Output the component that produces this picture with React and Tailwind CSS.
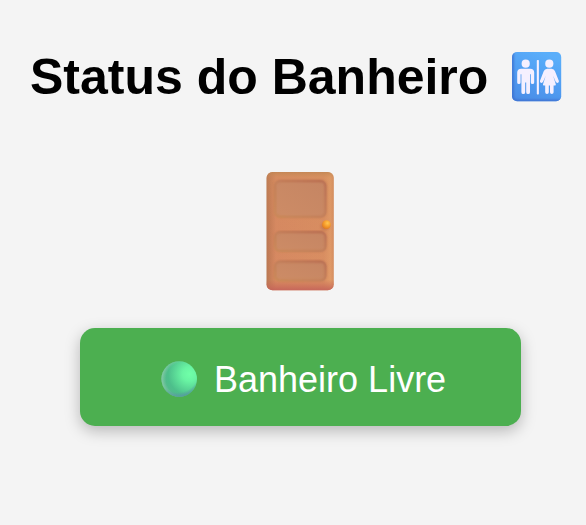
function RestroomIcon() {
  return (
    <svg className="h-[50px] w-[50px] shrink-0" viewBox="0 0 50 50" aria-hidden="true">
      <defs>
        <linearGradient id="sign" x1="0.2" y1="1" x2="0.6" y2="0">
          <stop offset="0" stopColor="#4a8ce6" />
          <stop offset="0.5" stopColor="#509df2" />
          <stop offset="1" stopColor="#5aaefa" />
        </linearGradient>
        <filter id="edge" x="-10%" y="-10%" width="120%" height="120%">
          <feGaussianBlur stdDeviation="1" />
        </filter>
        <clipPath id="signClip"><rect x="0" y="0" width="49.2" height="49.2" rx="5" /></clipPath>
      </defs>
      <g clipPath="url(#signClip)">
        <rect width="50" height="50" fill="url(#sign)" />
        <path d="M.5 0V44Q.5 49 6 49H50" fill="none" stroke="#3e70cf" strokeWidth="2.4" filter="url(#edge)" />
      </g>
      <g fill="#f5f0ff">
        <circle cx="13.7" cy="11.7" r="4.1" />
        <path d="M9.2 16.8H18.2Q22.2 16.8 22.2 20.6V30.4Q22.2 32.1 20.5 32.1T18.8 30.4V22.2H18V40.2Q18 42.1 16.1 42.1T14.2 40.2V30.5H13.2V40.2Q13.2 42.1 11.3 42.1T9.4 40.2V22.2H8.6V30.4Q8.6 32.1 6.9 32.1T5.2 30.4V20.6Q5.2 16.8 9.2 16.8Z" />
        <rect x="24.8" y="8.1" width="2.1" height="34.4" rx=".7" />
        <circle cx="37.3" cy="11.7" r="4.1" />
        <path d="M35.2 16.8H39.5Q42.2 16.8 43 19.3L46.8 28.7Q47.3 30.2 46 30.8T43.7 29.8L41.1 23.8L43.8 32.2Q44.1 33.4 42.9 33.4H41.6V40.3Q41.6 42 39.8 42T38 40.3V33.4H36.8V40.3Q36.8 42 35 42T33.2 40.3V33.4H31.9Q30.7 33.4 31 32.2L33.7 23.8L31.1 29.8Q30.3 31.4 28.9 30.8T28 28.7L31.7 19.3Q32.6 16.8 35.2 16.8Z" />
      </g>
    </svg>
  );
}

const panels = [
  { y: 8.3, h: 37.2 },
  { y: 59.3, h: 20.6 },
  { y: 88.8, h: 20.5 },
];

function DoorIcon() {
  return (
    <svg className="h-[119px] w-[68px]" viewBox="0 0 68 119" aria-hidden="true">
      <defs>
        <linearGradient id="wood" x1="0" y1="0" x2="1" y2="0">
          <stop offset="0" stopColor="#b97852" />
          <stop offset="0.06" stopColor="#c77f59" />
          <stop offset="0.14" stopColor="#d78a62" />
          <stop offset="0.85" stopColor="#d98f62" />
          <stop offset="0.95" stopColor="#e09a67" />
          <stop offset="1" stopColor="#d58e60" />
        </linearGradient>
        <linearGradient id="woodShade" x1="0" y1="0" x2="0" y2="1">
          <stop offset="0" stopColor="#bd8551" stopOpacity="0.75" />
          <stop offset="0.05" stopColor="#cf9158" stopOpacity="0.2" />
          <stop offset="0.91" stopColor="#c96855" stopOpacity="0" />
          <stop offset="1" stopColor="#c4625a" stopOpacity="0.9" />
        </linearGradient>
        <linearGradient id="panel" x1="0" y1="1" x2="1" y2="0">
          <stop offset="0" stopColor="#cd8c66" />
          <stop offset="1" stopColor="#c58563" />
        </linearGradient>
        <linearGradient id="rim" x1="0" y1="1" x2="1" y2="0">
          <stop offset="0" stopColor="#c98650" />
          <stop offset="0.5" stopColor="#c17a53" />
          <stop offset="1" stopColor="#b5654b" />
        </linearGradient>
        <radialGradient id="knob" cx="0.62" cy="0.32" r="0.7">
          <stop offset="0" stopColor="#ffc552" />
          <stop offset="0.45" stopColor="#f9a42f" />
          <stop offset="1" stopColor="#df7920" />
        </radialGradient>
        <filter id="soft" x="-10%" y="-10%" width="120%" height="120%">
          <feGaussianBlur stdDeviation="0.8" />
        </filter>
      </defs>
      <rect x="0.5" y="0" width="67.3" height="118.3" rx="6" fill="url(#wood)" />
      <rect x="0.5" y="0" width="67.3" height="118.3" rx="6" fill="url(#woodShade)" />
      {panels.map(({ y, h }) => (
        <g key={y}>
          <rect x="8.3" y={y} width="52" height={h} rx="5.5" fill="url(#panel)" />
          <rect x="9" y={y + 0.7} width="50.6" height={h - 1.4} rx="5" fill="none" stroke="url(#rim)" strokeWidth="1.8" filter="url(#soft)" />
        </g>
      ))}
      <ellipse cx="59" cy="54.5" rx="4.5" ry="4" fill="#b8683f" opacity="0.45" filter="url(#soft)" />
      <circle cx="60.4" cy="52.7" r="4.4" fill="url(#knob)" />
    </svg>
  );
}

function FreeDot() {
  return (
    <svg className="h-9 w-9 shrink-0" viewBox="0 0 36 36" aria-hidden="true">
      <defs>
        <radialGradient id="ball" cx="0.79" cy="0.36" r="0.8">
          <stop offset="0" stopColor="#70ffa8" />
          <stop offset="0.25" stopColor="#69f4a3" />
          <stop offset="0.75" stopColor="#4dbf8b" />
          <stop offset="1" stopColor="#55b88c" />
        </radialGradient>
        <radialGradient id="ballLeft" cx="0.6" cy="0.5" r="0.6">
          <stop offset="0.78" stopColor="#8cceaa" stopOpacity="0" />
          <stop offset="1" stopColor="#98d0b0" stopOpacity="0.75" />
        </radialGradient>
        <radialGradient id="ballBottom" cx="0.47" cy="0.3" r="0.7">
          <stop offset="0.82" stopColor="#5799a0" stopOpacity="0" />
          <stop offset="1" stopColor="#5799a0" />
        </radialGradient>
      </defs>
      <circle cx="18.2" cy="18" r="17.8" fill="url(#ball)" />
      <circle cx="18.2" cy="18" r="17.8" fill="url(#ballLeft)" />
      <circle cx="18.2" cy="18" r="17.8" fill="url(#ballBottom)" />
    </svg>
  );
}

export default function App() {
  return (
    <main className="flex h-[525px] w-[586px] flex-col overflow-hidden bg-[#f4f4f4] pt-[48px] font-['Liberation_Sans',Arial,sans-serif]">
      <h1 className="flex h-[57px] items-center gap-[24px] pl-[30px] text-[50px] leading-[57px] font-bold whitespace-nowrap text-black">
        <span className="pt-[2px]">Status do Banheiro</span>
        <RestroomIcon />
      </h1>
      <div className="mt-[67px] ml-[266px] h-[119px]">
        <DoorIcon />
      </div>
      <button className="mt-[37px] ml-[80px] flex h-[98px] w-[441px] items-center rounded-[15px] bg-[#4caf50] pt-[4px] pl-[81px] text-left text-[36px] leading-[42px] text-white shadow-[0_5px_15px_rgba(0,0,0,0.25)]">
        <FreeDot />
        <span className="ml-[17px] pt-[2px] whitespace-nowrap">Banheiro Livre</span>
      </button>
    </main>
  );
}
